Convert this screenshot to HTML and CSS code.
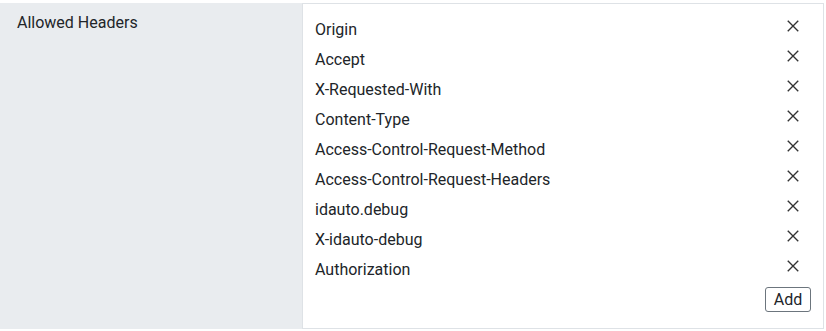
FILE: index.html
```html
<!DOCTYPE html>
<html>
<head>
<meta charset="utf-8">
<link rel="stylesheet" href="styles.css">
</head>
<body>
<div class="field">
  <div class="label">Allowed Headers</div>
  <div class="value">
    <ul class="list">
      <li class="item"><span>Origin</span><button class="remove" aria-label="Remove"><svg viewBox="0 0 12 12" width="12" height="12"><path d="M0.75 0.75L11.25 11.25M11.25 0.75L0.75 11.25"/></svg></button></li>
      <li class="item"><span>Accept</span><button class="remove" aria-label="Remove"><svg viewBox="0 0 12 12" width="12" height="12"><path d="M0.75 0.75L11.25 11.25M11.25 0.75L0.75 11.25"/></svg></button></li>
      <li class="item"><span>X-Requested-With</span><button class="remove" aria-label="Remove"><svg viewBox="0 0 12 12" width="12" height="12"><path d="M0.75 0.75L11.25 11.25M11.25 0.75L0.75 11.25"/></svg></button></li>
      <li class="item"><span>Content-Type</span><button class="remove" aria-label="Remove"><svg viewBox="0 0 12 12" width="12" height="12"><path d="M0.75 0.75L11.25 11.25M11.25 0.75L0.75 11.25"/></svg></button></li>
      <li class="item"><span>Access-Control-Request-Method</span><button class="remove" aria-label="Remove"><svg viewBox="0 0 12 12" width="12" height="12"><path d="M0.75 0.75L11.25 11.25M11.25 0.75L0.75 11.25"/></svg></button></li>
      <li class="item"><span>Access-Control-Request-Headers</span><button class="remove" aria-label="Remove"><svg viewBox="0 0 12 12" width="12" height="12"><path d="M0.75 0.75L11.25 11.25M11.25 0.75L0.75 11.25"/></svg></button></li>
      <li class="item"><span>idauto.debug</span><button class="remove" aria-label="Remove"><svg viewBox="0 0 12 12" width="12" height="12"><path d="M0.75 0.75L11.25 11.25M11.25 0.75L0.75 11.25"/></svg></button></li>
      <li class="item"><span>X-idauto-debug</span><button class="remove" aria-label="Remove"><svg viewBox="0 0 12 12" width="12" height="12"><path d="M0.75 0.75L11.25 11.25M11.25 0.75L0.75 11.25"/></svg></button></li>
      <li class="item"><span>Authorization</span><button class="remove" aria-label="Remove"><svg viewBox="0 0 12 12" width="12" height="12"><path d="M0.75 0.75L11.25 11.25M11.25 0.75L0.75 11.25"/></svg></button></li>
    </ul>
    <div class="actions"><button class="add">Add</button></div>
  </div>
</div>
</body>
</html>
```
FILE: styles.css
```css
html, body {
  margin: 0;
  padding: 0;
  background: #ffffff;
}
body {
  padding-top: 3px;
  font-family: Roboto, "Liberation Sans", Arial, sans-serif;
  font-size: 16px;
  color: #212529;
}
.field {
  display: flex;
  width: 824px;
  height: 326px;
  background: #e9ecef;
}
.label {
  width: 302px;
  box-sizing: border-box;
  padding: 9px 17px;
  line-height: 22px;
}
.value {
  flex: 1;
  background: #ffffff;
  border: 1px solid #dee2e6;
  box-sizing: border-box;
  padding: 11px 12px 0 12px;
  display: flex;
  flex-direction: column;
}
.list {
  list-style: none;
  margin: 0;
  padding: 0;
}
.item {
  display: flex;
  align-items: center;
  justify-content: space-between;
  height: 30px;
}
.item span {
  line-height: 30px;
}
.remove {
  border: 0;
  background: transparent;
  padding: 0;
  width: 12px;
  height: 12px;
  display: flex;
  margin-right: 12px;
  margin-bottom: 9px;
}
.remove svg {
  display: block;
  stroke: #333333;
  stroke-width: 1.4;
  fill: none;
}
.actions {
  display: flex;
  justify-content: flex-end;
  margin-top: 2px;
}
.add {
  font-family: Roboto, "Liberation Sans", Arial, sans-serif;
  font-size: 16px;
  color: #212529;
  background: #ffffff;
  border: 1px solid #6c757d;
  border-radius: 3px;
  width: 46px;
  height: 25px;
  padding: 0;
  margin-right: 0;
}
```
